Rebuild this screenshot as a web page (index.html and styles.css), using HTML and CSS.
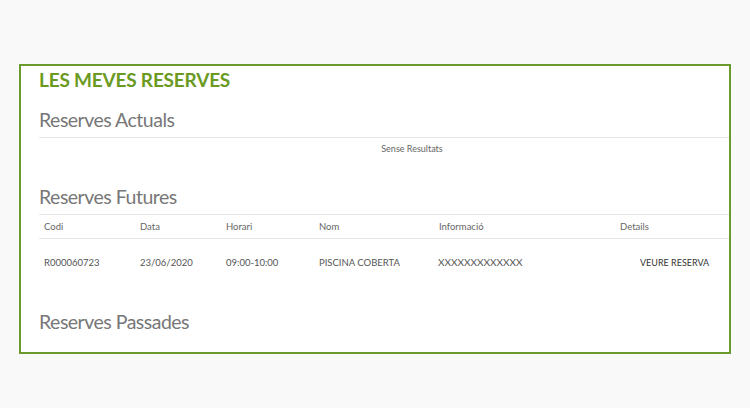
FILE: index.html
```html
<!DOCTYPE html>
<html lang="ca">
<head>
<meta charset="utf-8">
<title>Les meves reserves</title>
<link rel="stylesheet" href="styles.css">
</head>
<body>
<div class="box">
  <div class="inner">
    <h1 class="title">LES MEVES RESERVES</h1>
    <h2 class="section section-first">Reserves Actuals</h2>
    <div class="empty">Sense Resultats</div>
    <h2 class="section">Reserves Futures</h2>
    <table class="res-table">
      <thead>
        <tr>
          <th class="c1">Codi</th>
          <th class="c2">Data</th>
          <th class="c3">Horari</th>
          <th class="c4">Nom</th>
          <th class="c5">Informació</th>
          <th class="c6">Details</th>
        </tr>
      </thead>
      <tbody>
        <tr>
          <td>R000060723</td>
          <td>23/06/2020</td>
          <td>09:00-10:00</td>
          <td>PISCINA COBERTA</td>
          <td class="info">XXXXXXXXXXXXX</td>
          <td><span class="link">VEURE RESERVA</span></td>
        </tr>
      </tbody>
    </table>
    <h2 class="section section-past">Reserves Passades</h2>
  </div>
</div>
</body>
</html>
```

FILE: styles.css
```css
html, body {
  margin: 0;
  padding: 0;
}
body {
  background: #f9f9f9;
  font-family: Lato, "Open Sans", sans-serif;
  width: 750px;
  height: 408px;
  overflow: hidden;
}
.box {
  margin: 64px 0 0 19px;
  width: 712px;
  height: 290px;
  box-sizing: border-box;
  border: 2px solid #6c9a2c;
  background: #fff;
  overflow: hidden;
  padding-left: 18px;
}
.inner {
  width: 746px;
}
.title {
  margin: 0;
  height: 28px;
  line-height: 28px;
  font-size: 19px;
  font-weight: 700;
  letter-spacing: -0.2px;
  color: #6a9a22;
}
.section {
  margin: 0;
  font-weight: 400;
  font-size: 19.5px;
  letter-spacing: -0.5px;
  line-height: 24px;
  color: #777;
  padding: 25px 0 5px;
  border-bottom: 1px solid #e6e6e6;
}
.section-first {
  padding-top: 14px;
}
.section-past {
  border-bottom: none;
  padding-top: 25px;
}
.empty {
  height: 22px;
  line-height: 22px;
  font-size: 9px;
  color: #666;
  text-align: center;
}
.res-table {
  border-collapse: collapse;
  width: 690px;
  font-size: 9.5px;
  color: #555;
}
.res-table th {
  text-align: left;
  font-weight: 400;
  color: #666;
  height: 23px;
  padding: 0 0 0 5px;
  border-bottom: 1px solid #e6e6e6;
}
.res-table td {
  height: 46px;
  padding: 0 0 0 5px;
}
.c1 { width: 91px; }
.c2 { width: 81px; }
.c3 { width: 88px; }
.c4 { width: 115px; }
.c5 { width: 176px; }
.res-table td.info {
  font-size: 10px;
  padding-left: 4px;
}
.link {
  padding-left: 20px;
  font-size: 9px;
  color: #333;
}
```
